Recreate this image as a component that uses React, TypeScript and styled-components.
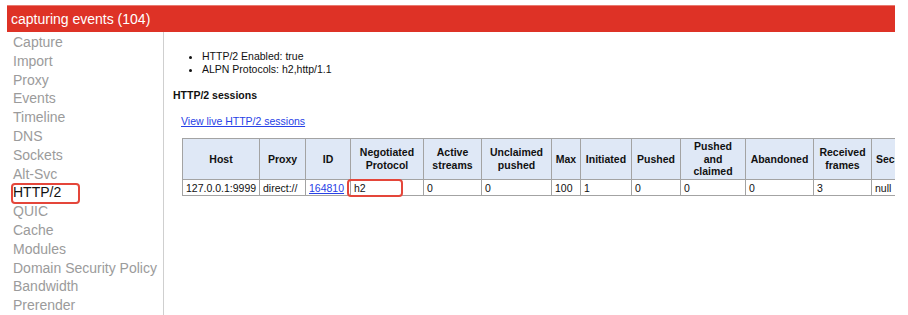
import React from "react";
import styled, { createGlobalStyle } from "styled-components";

const GlobalStyle = createGlobalStyle`
  html, body {
    margin: 0;
    padding: 0;
    width: 908px;
    height: 315px;
    overflow: hidden;
    background: #ffffff;
  }
  body {
    font-family: "Liberation Sans", Arial, sans-serif;
  }
`;

const Page = styled.div`
  margin: 5px 0 0 7px;
  width: 888px;
  height: 310px;
  overflow: hidden;
`;

const StatusBar = styled.div`
  width: 888px;
  height: 27px;
  box-sizing: border-box;
  background: #de3226;
  border-top: 1px solid #e87a70;
  color: #ffffff;
  font-size: 14px;
  line-height: 26px;
  padding-left: 4px;
  white-space: nowrap;
`;

const Main = styled.div`
  display: flex;
  align-items: stretch;
  height: 283px;
`;

const Sidebar = styled.nav`
  flex: 0 0 150px;
  padding: 1px 0 0 6px;
  border-right: 1px solid #cfcfcf;
  display: flex;
  flex-direction: column;
`;

const NavItem = styled.div<{ $active?: boolean }>`
  position: relative;
  font-size: 14px;
  line-height: 18.8px;
  height: 18.8px;
  color: ${(p) => (p.$active ? "#111111" : "#9b9b9b")};
  white-space: nowrap;

  ${(p) =>
    p.$active &&
    `
    &::after {
      content: "";
      position: absolute;
      left: -2px;
      top: 0;
      width: 69px;
      height: 21px;
      box-sizing: border-box;
      border: 2px solid #e4463a;
      border-radius: 4px;
    }
  `}
`;

const Content = styled.section`
  flex: 1;
  min-width: 0;
  padding: 1px 0 0 9px;
  font-size: 10.5px;
  line-height: 13px;
  color: #111111;
  white-space: nowrap;
  overflow: hidden;
`;

const InfoList = styled.ul`
  margin: 17px 0 0 0;
  padding-left: 29px;
  list-style: disc;
`;

const SectionTitle = styled.h4`
  margin: 13px 0 0 0;
  font-size: 10.5px;
  line-height: 13px;
  font-weight: bold;
`;

const LinkRow = styled.div`
  margin: 13px 0 0 8px;
`;

const Link = styled.a`
  color: #2741e6;
  text-decoration: underline;
  cursor: pointer;
`;

const Table = styled.table`
  margin: 10px 0 0 9px;
  border-collapse: collapse;
  table-layout: fixed;
  width: 895px;
  font-size: 10.5px;
  line-height: 12.6px;
`;

const Th = styled.th`
  background: #dfe8f6;
  border: 1px solid #a3a3a3;
  padding: 1px 3px;
  font-weight: bold;
  text-align: center;
  vertical-align: middle;
  white-space: normal;
`;

const Td = styled.td<{ $marked?: boolean }>`
  position: relative;
  border: 1px solid #a3a3a3;
  padding: 2px 3px 1px 3px;
  text-align: left;
  white-space: nowrap;
  overflow: visible;

  ${(p) =>
    p.$marked &&
    `
    &::after {
      content: "";
      position: absolute;
      left: -4px;
      top: -1px;
      width: 56px;
      bottom: -2px;
      box-sizing: border-box;
      border: 2px solid #e4463a;
      border-radius: 4px;
    }
  `}
`;

const navItems = [
  "Capture",
  "Import",
  "Proxy",
  "Events",
  "Timeline",
  "DNS",
  "Sockets",
  "Alt-Svc",
  "HTTP/2",
  "QUIC",
  "Cache",
  "Modules",
  "Domain Security Policy",
  "Bandwidth",
  "Prerender",
];

const columns: { label: string; width: number }[] = [
  { label: "Host", width: 77 },
  { label: "Proxy", width: 46 },
  { label: "ID", width: 45 },
  { label: "Negotiated Protocol", width: 73 },
  { label: "Active streams", width: 58 },
  { label: "Unclaimed pushed", width: 70 },
  { label: "Max", width: 29 },
  { label: "Initiated", width: 51 },
  { label: "Pushed", width: 49 },
  { label: "Pushed and claimed", width: 65 },
  { label: "Abandoned", width: 68 },
  { label: "Received frames", width: 58 },
  { label: "Secure", width: 44 },
  { label: "Sent settings", width: 62 },
  { label: "Error", width: 100 },
];

export default function App() {
  return (
    <>
      <GlobalStyle />
      <Page>
        <StatusBar>capturing events (104)</StatusBar>
        <Main>
          <Sidebar>
            {navItems.map((item) => (
              <NavItem key={item} $active={item === "HTTP/2"}>
                {item}
              </NavItem>
            ))}
          </Sidebar>
          <Content>
            <InfoList>
              <li>HTTP/2 Enabled: true</li>
              <li>ALPN Protocols: h2,http/1.1</li>
            </InfoList>
            <SectionTitle>HTTP/2 sessions</SectionTitle>
            <LinkRow>
              <Link>View live HTTP/2 sessions</Link>
            </LinkRow>
            <Table>
              <colgroup>
                {columns.map((c) => (
                  <col key={c.label} style={{ width: c.width }} />
                ))}
              </colgroup>
              <thead>
                <tr>
                  {columns.map((c) => (
                    <Th key={c.label}>{c.label}</Th>
                  ))}
                </tr>
              </thead>
              <tbody>
                <tr>
                  <Td>127.0.0.1:9999</Td>
                  <Td>direct://</Td>
                  <Td>
                    <Link>164810</Link>
                  </Td>
                  <Td $marked>h2</Td>
                  <Td>0</Td>
                  <Td>0</Td>
                  <Td>100</Td>
                  <Td>1</Td>
                  <Td>0</Td>
                  <Td>0</Td>
                  <Td>0</Td>
                  <Td>3</Td>
                  <Td>null</Td>
                  <Td>true</Td>
                  <Td>None</Td>
                </tr>
              </tbody>
            </Table>
          </Content>
        </Main>
      </Page>
    </>
  );
}
